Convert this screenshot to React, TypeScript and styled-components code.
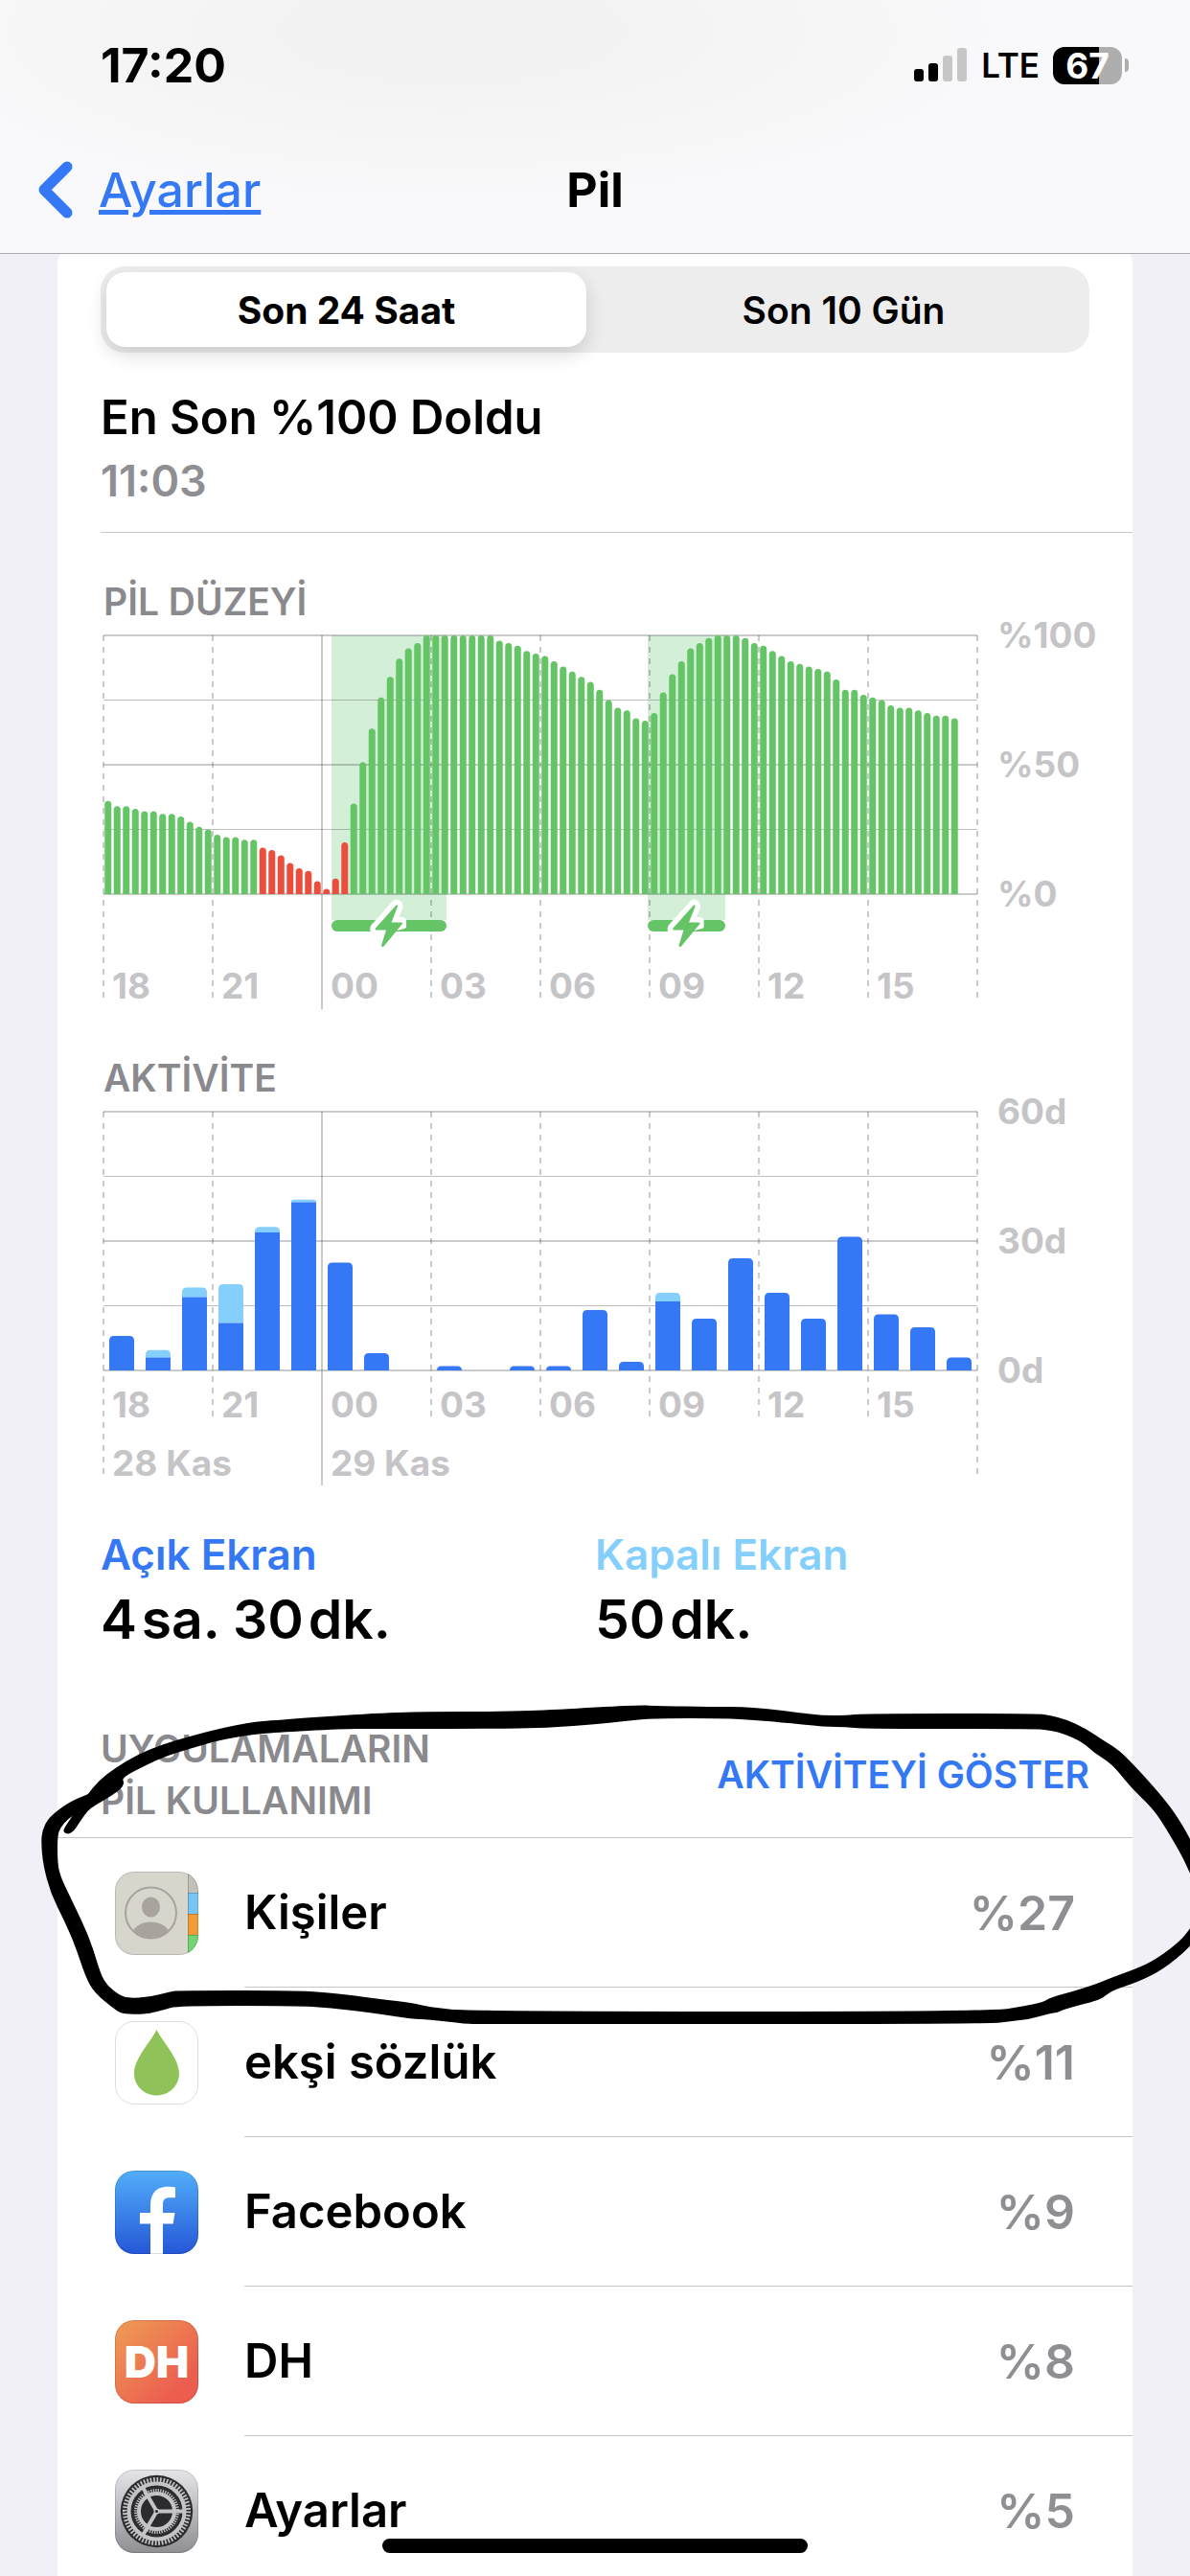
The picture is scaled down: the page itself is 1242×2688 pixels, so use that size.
import React, { useId, useState } from "react";
import styled, { createGlobalStyle } from "styled-components";

const color = {
  page: "#f1f0f6",
  card: "#ffffff",
  ink: "#000000",
  blue: "#3478f6",
  sky: "#84cffb",
  green: "#65c466",
  red: "#eb4e3d",
  grey: "#8e8e93",
  caption: "#8a8a8e",
  axis: "#c5c5c7",
  line: "#c6c6c8",
};

const fontStack = `Inter, "Liberation Sans", sans-serif`;

const GlobalStyle = createGlobalStyle`
  *, *::before, *::after { box-sizing: border-box; }
  body {
    margin: 0;
    background: ${color.page};
    color: ${color.ink};
    font-family: ${fontStack};
    font-weight: 600;
  }
  h1, h2, p, ul, dl, dd { margin: 0; padding: 0; }
  button { font: inherit; color: inherit; border: 0; background: none; padding: 0; cursor: pointer; }
`;

const Screen = styled.div`
  position: relative;
  display: flex;
  flex-direction: column;
  height: 100vh;
  overflow: hidden;
`;

/* ---------- header ---------- */

const Header = styled.header`
  position: relative;
  z-index: 1;
  flex: none;
  padding-bottom: 4px;
  border-bottom: 1px solid #a9a9ad;
  background: radial-gradient(ellipse 48% 70% at 38% 12%, #f2f2f2 20%, #f9f9fb 100%);
`;

const StatusBar = styled.div`
  display: flex;
  align-items: center;
  justify-content: space-between;
  height: 136px;
  padding: 0 64px 0 105px;
`;

const Clock = styled.time`
  font-size: 50px;
  font-weight: 700;
`;

const StatusIcons = styled.div`
  display: flex;
  align-items: center;
  gap: 14px;
`;

const Carrier = styled.span`
  font-size: 35px;
  font-weight: 600;
`;

const Battery = styled.span`
  display: flex;
  align-items: center;
  gap: 3px;

  &::after {
    content: "";
    width: 4px;
    height: 14px;
    border-radius: 0 4px 4px 0;
    background: #aeaeae;
  }
`;

const BatteryBody = styled.span<{ $level: number }>`
  width: 72px;
  height: 39px;
  border-radius: 12px;
  background: linear-gradient(to right, #000 ${(p) => p.$level}%, #aeaeae ${(p) => p.$level}%);
  color: #fff;
  font-size: 37px;
  font-weight: 700;
  line-height: 39px;
  text-align: center;
`;

const NavBar = styled.nav`
  display: grid;
  grid-template-columns: 1fr auto 1fr;
  align-items: center;
  height: 124px;
  padding: 0 40px;
`;

const BackLink = styled.a`
  display: flex;
  align-items: center;
  gap: 27px;
  color: ${color.blue};
  font-size: 50px;
  font-weight: 500;
  text-decoration: none;
`;

const BackLabel = styled.span`
  text-decoration: underline;
  text-decoration-thickness: 5px;
`;

const Title = styled.h1`
  font-size: 50px;
  font-weight: 700;
`;

/* ---------- card ---------- */

const Content = styled.main`
  flex: 1;
  min-height: 0;
  padding: 0 60px;
`;

const Card = styled.div`
  margin-top: -18px;
  padding-top: 31px;
  border-radius: 30px 30px 0 0;
  background: ${color.card};
`;

const Segmented = styled.div`
  display: grid;
  grid-template-columns: 1fr 1fr;
  gap: 18px;
  height: 90px;
  margin: 0 45px;
  padding: 6px;
  border-radius: 25px;
  background: #ededed;
`;

const Segment = styled.button<{ $active: boolean }>`
  border-radius: 20px;
  font-size: 39px;
  font-weight: ${(p) => (p.$active ? 700 : 600)};
  ${(p) => p.$active && `background: #fff; box-shadow: 0 8px 20px rgba(0, 0, 0, 0.14);`}
`;

const LastCharge = styled.section`
  margin: 38px 0 0 45px;
  padding-bottom: 25px;
  border-bottom: 1px solid ${color.line};
`;

const LastChargeTitle = styled.h2`
  font-size: 49px;
  font-weight: 600;
  line-height: 60px;
`;

const LastChargeTime = styled.p`
  margin-top: 8px;
  color: ${color.grey};
  font-size: 45px;
  line-height: 56px;
`;

const ChartSection = styled.section`
  margin: 48px 0 0 48px;
`;

const ChartTitle = styled.h2`
  color: ${color.caption};
  font-size: 39px;
  font-weight: 600;
  line-height: 48px;
`;

const ChartSvg = styled.svg`
  display: block;
  width: 100%;
  height: auto;
  overflow: visible;

  text {
    fill: ${color.axis};
    font-size: 37px;
    font-weight: 700;
  }
`;

const Totals = styled.dl`
  display: grid;
  grid-template-columns: 1fr 1fr;
  margin: 44px 45px 0;
`;

const TotalName = styled.dt<{ $color: string }>`
  color: ${(p) => p.$color};
  font-size: 44px;
  line-height: 56px;
`;

const TotalValue = styled.dd`
  padding-top: 4px;
  font-size: 57px;
  font-weight: 600;
  line-height: 72px;
`;

const Usage = styled.section`
  position: relative;
  margin-top: 72px;
`;

const UsageHeader = styled.div`
  display: flex;
  align-items: center;
  justify-content: space-between;
  padding: 0 45px 11px;
  border-bottom: 1px solid ${color.line};
`;

const UsageTitle = styled.h2`
  width: 360px;
  color: ${color.caption};
  font-size: 39px;
  font-weight: 600;
  line-height: 54px;
`;

const ToggleButton = styled.button`
  color: ${color.blue};
  font-size: 39px;
  font-weight: 600;
  line-height: 54px;
`;

const AppList = styled.ul`
  list-style: none;
`;

const AppRow = styled.li`
  display: flex;
  align-items: center;
  gap: 48px;
  height: 156px;
  padding-left: 60px;
`;

const AppText = styled.div`
  display: flex;
  flex: 1;
  align-items: center;
  justify-content: space-between;
  align-self: stretch;
  padding-right: 60px;
  border-bottom: 1px solid ${color.line};
`;

const AppName = styled.span`
  font-size: 49px;
`;

const AppShare = styled.span`
  color: ${color.grey};
  font-size: 50px;
`;

const Scribble = styled.svg`
  position: absolute;
  top: -28px;
  left: -60px;
  width: calc(100% + 120px);
  height: auto;
  overflow: visible;
  pointer-events: none;
`;

const HomeIndicator = styled.div`
  position: absolute;
  bottom: 24px;
  left: 50%;
  width: 444px;
  height: 15px;
  border-radius: 8px;
  background: #000;
  transform: translateX(-50%);
`;

/* ---------- charts ---------- */

const PLOT_WIDTH = 912;
const PLOT_TOP = 11;
const PLOT_HEIGHT = 270;
const PLOT_BOTTOM = PLOT_TOP + PLOT_HEIGHT;
const STEP = 114;
const hours = ["18", "21", "00", "03", "06", "09", "12", "15"];

const levels = [
  36, 34, 34, 33, 32, 32, 31, 31, 30, 28, 26, 25, 23, 22, 22, 21, 21, 18, 17, 15, 12, 10, 9, 5, 2, 6, 20, 35, 51, 64,
  76, 84, 91, 95, 97, 100, 100, 100, 100, 100, 100, 100, 100, 98, 97, 96, 94, 93, 92, 90, 88, 86, 84, 82, 79, 75, 72,
  71, 68, 67, 70, 78, 85, 90, 95, 97, 99, 100, 100, 100, 99, 97, 96, 94, 92, 90, 89, 88, 87, 86, 83, 79, 79, 77, 76,
  75, 73, 72, 72, 71, 70, 69, 69, 68,
];

const charges = [
  { from: 238, to: 358 },
  { from: 568, to: 649 },
];

/* [screen on, screen off] minutes per hour */
const activity: [number, number][] = [
  [8, 0], [3, 1.7], [17, 2.2], [11, 9], [32, 1.3], [39, 0.6], [25, 0], [4, 0],
  [0, 0], [1, 0], [0, 0], [1, 0], [1, 0], [14, 0], [2, 0], [16, 2],
  [12, 0], [26, 0], [18, 0], [12, 0], [31, 0], [13, 0], [10, 0], [3, 0],
];

function roundedBar(x: number, top: number, width: number, bottom: number, radius: number) {
  const r = Math.min(radius, bottom - top);
  return `M${x} ${bottom}V${top + r}q0 ${-r} ${r} ${-r}h${width - 2 * r}q${r} 0 ${r} ${r}V${bottom}z`;
}

function GridRows({ labels }: { labels: string[] }) {
  return (
    <>
      {[0, 1, 2, 3, 4].map((i) => {
        const y = PLOT_TOP + (PLOT_HEIGHT / 4) * i;
        const minor = i % 2 === 1;
        return (
          <line key={i} x1={0} x2={PLOT_WIDTH} y1={y} y2={y} stroke="#3c3c43" strokeOpacity={minor ? 0.32 : 0.27}
            strokeWidth={minor ? 1 : 2} />
        );
      })}
      {labels.map((label, i) => (
        <text key={label} x={PLOT_WIDTH + 21} y={PLOT_TOP + (PLOT_HEIGHT / 2) * i + 13}>{label}</text>
      ))}
    </>
  );
}

function GridColumns({ bottom, edgeBottom }: { bottom: number; edgeBottom: number }) {
  return (
    <>
      {[...hours, ""].map((hour, i) => {
        const midnight = hour === "00";
        const edge = i === 0 || i === hours.length;
        return (
          <line key={i} x1={i * STEP} x2={i * STEP} y1={PLOT_TOP}
            y2={midnight ? edgeBottom + 6 : edge ? edgeBottom : bottom}
            stroke="#3c3c43" strokeOpacity={0.27} strokeWidth={2} strokeDasharray={midnight ? undefined : "6 6"} />
        );
      })}
    </>
  );
}

function HourLabels({ y }: { y: number }) {
  return (
    <>
      {hours.map((hour, i) => (
        <text key={hour} x={i * STEP + 9} y={y}>{hour}</text>
      ))}
    </>
  );
}

const BOLT = "M22 0.5 L0.5 24.5 Q-0.5 26.5 1.5 26.5 L11.5 26.5 L6.5 42.5 Q7 45 9 43.5 L28 20.5 Q29.5 18.5 27 18.5 L17 18.5 L23.5 2 Q23.5 -0.5 22 0.5z";

function LevelChart() {
  return (
    <ChartSvg viewBox="0 0 1074 401" role="img" aria-label="Pil düzeyi grafiği">
      {charges.map((c) => (
        <rect key={c.from} x={c.from} y={PLOT_TOP} width={c.to - c.from} height={297} fill="#d3efd8" />
      ))}
      <GridRows labels={["%100", "%50", "%0"]} />
      <GridColumns bottom={395} edgeBottom={395} />
      {levels.map((level, i) => (
        <path key={i}
          d={roundedBar(i * 9.5 + 1.25, PLOT_BOTTOM - (level / 100) * PLOT_HEIGHT, 7, PLOT_BOTTOM, 3.5)}
          fill={level <= 20 ? color.red : color.green} />
      ))}
      {charges.map((c) => (
        <g key={c.from}>
          <rect x={c.from} y={308} width={c.to - c.from} height={12} rx={6} fill={color.green} />
          <g transform={`translate(${(c.from + c.to) / 2 - 14.5} 292)`}>
            <path d={BOLT} fill="#fff" stroke="#fff" strokeWidth={11} strokeLinejoin="round"
              clipPath="path('M-8 -8H38V30L22 34H-8z')" />
            <path d={BOLT} fill={color.green} />
          </g>
        </g>
      ))}
      <HourLabels y={390} />
    </ChartSvg>
  );
}

function ActivityChart() {
  const y = (minutes: number) => PLOT_BOTTOM - minutes * 4.5;
  return (
    <ChartSvg viewBox="0 0 1074 401" role="img" aria-label="Aktivite grafiği">
      <GridRows labels={["60d", "30d", "0d"]} />
      <GridColumns bottom={335} edgeBottom={395} />
      {activity.map(([on, off], i) => {
        const x = i * 38 + 6;
        if (!on) return null;
        if (!off) return <path key={i} d={roundedBar(x, y(on), 26, PLOT_BOTTOM, 5)} fill={color.blue} />;
        return (
          <g key={i}>
            <path d={roundedBar(x, y(on + off), 26, y(on), 5)} fill={color.sky} />
            <rect x={x} y={y(on)} width={26} height={on * 4.5} fill={color.blue} />
          </g>
        );
      })}
      <HourLabels y={330} />
      <text x={9} y={391}>28 Kas</text>
      <text x={2 * STEP + 9} y={391}>29 Kas</text>
    </ChartSvg>
  );
}

/* ---------- icons ---------- */

function IconFrame({ children, fill }: { children: (id: string) => React.ReactNode; fill: (id: string) => string }) {
  const id = useId();
  return (
    <svg width="87" height="87" viewBox="0 0 87 87" aria-hidden="true">
      <clipPath id={`${id}c`}>
        <rect width="87" height="87" rx="20" />
      </clipPath>
      <g clipPath={`url(#${id}c)`}>
        <rect width="87" height="87" fill={fill(id)} />
        {children(id)}
      </g>
      <rect x=".5" y=".5" width="86" height="86" rx="19.5" fill="none" stroke="#000" strokeOpacity=".13" />
    </svg>
  );
}

function ContactsIcon() {
  return (
    <IconFrame fill={() => "#d6d6cd"}>
      {(id) => (
        <>
          <rect x="76" width="11" height="22" fill="#c2c1b9" />
          <rect x="76" y="22" width="11" height="22" fill="#75c5f5" />
          <rect x="76" y="44" width="11" height="22" fill="#f19a37" />
          <rect x="76" y="66" width="11" height="21" fill="#72d572" />
          <path d="M76.500 0V87M76 22.500H87M76 44.500H87M76 66.500H87" stroke="#000" strokeOpacity=".2" />
          <clipPath id={`${id}p`}>
            <circle cx="37.500" cy="43" r="27" />
          </clipPath>
          <ellipse cx="37.500" cy="37" rx="9.500" ry="10.500" fill="#a8a39d" />
          <ellipse cx="37.500" cy="66" rx="19.500" ry="13.500" fill="#a8a39d" clipPath={`url(#${id}p)`} />
          <circle cx="37.500" cy="43" r="26.500" fill="none" stroke="#a8a39d" strokeWidth="2" />
        </>
      )}
    </IconFrame>
  );
}

function DropIcon() {
  return (
    <IconFrame fill={() => "#ffffff"}>
      {() => <path d="M43.500 9C50 22 67 39 67 54.500C67 68 56 77.500 43.500 77.500S20 68 20 54.500C20 39 37 22 43.500 9z" fill="#8fc258" />}
    </IconFrame>
  );
}

function FacebookIcon() {
  return (
    <IconFrame fill={(id) => `url(#${id}g)`}>
      {(id) => (
        <>
          <linearGradient id={`${id}g`} x2="0" y2="1">
            <stop stopColor="#52aefa" />
            <stop offset="1" stopColor="#2557d7" />
          </linearGradient>
          <path d="M37 87V55.500H26V44H37V36C37 23 44 16.700 55 16.700C58 16.700 61 17 63 17.500V28.300H57C52 28.300 50 31 50 35V44H62.500L60.700 55.500H50V87z" fill="#fff" />
        </>
      )}
    </IconFrame>
  );
}

function DhIcon() {
  return (
    <IconFrame fill={(id) => `url(#${id}g)`}>
      {(id) => (
        <>
          <linearGradient id={`${id}g`} x2="1" y2="1">
            <stop offset=".1" stopColor="#ee9553" />
            <stop offset=".8" stopColor="#ec5d50" />
          </linearGradient>
          <text x="43.500" y="60" textAnchor="middle" fill="#fff" fontSize="46" fontWeight="900">DH</text>
        </>
      )}
    </IconFrame>
  );
}

function SettingsIcon() {
  const metal = "#c4c4c8";
  const dark = "#2c2c2e";
  return (
    <IconFrame fill={(id) => `url(#${id}g)`}>
      {(id) => (
        <>
          <linearGradient id={`${id}g`} x2="0" y2="1">
            <stop stopColor="#e4e4e9" />
            <stop offset="1" stopColor="#8e8e93" />
          </linearGradient>
          <g transform="translate(43.500 43.500)" fill="none">
            <circle r="37.700" fill={dark} />
            <circle r="33" stroke={metal} strokeWidth="5" pathLength="120" strokeDasharray="1 1" />
            <circle r="29" stroke={metal} strokeWidth="4" />
            <circle r="21.500" stroke={metal} strokeWidth="4" pathLength="108" strokeDasharray="1 1" />
            <circle r="18.500" stroke={metal} strokeWidth="4" />
            {[0, 120, 240].map((a) => (
              <path key={a} d="M2 0H29" stroke={metal} strokeWidth="4" transform={`rotate(${a})`} />
            ))}
            <circle r="3" fill={metal} />
            <circle r="1.500" fill={dark} />
          </g>
        </>
      )}
    </IconFrame>
  );
}

function SignalIcon() {
  return (
    <svg width="56" height="36" viewBox="0 0 56 36" aria-hidden="true">
      <rect x="0" y="22" width="10" height="13" rx="3" />
      <rect x="15" y="16" width="10" height="19" rx="3" />
      <rect x="30" y="8" width="10" height="27" rx="3" fill="#c6c6c7" />
      <rect x="45" y="0" width="10" height="35" rx="3" fill="#c6c6c7" />
    </svg>
  );
}

/* ---------- hand-drawn loop ---------- */

type Point = [number, number];

const upperStroke: Point[] = [
  [67, 1907], [91, 1873], [103, 1858], [120, 1845], [143, 1831], [170, 1820], [201, 1811], [232, 1803], [263, 1797],
  [286, 1795], [384, 1788], [446, 1786], [527, 1786], [580, 1784], [665, 1779], [684, 1780], [743, 1781], [772, 1781],
  [801, 1783], [833, 1787], [858, 1790], [883, 1790], [901, 1788], [1083, 1788], [1096, 1790], [1112, 1794],
  [1132, 1803], [1153, 1817], [1163, 1823], [1173, 1831], [1194, 1853], [1214, 1876], [1227, 1893], [1242, 1918],
  [1256, 1950], [1256, 1985], [1242, 1955], [1234, 1937], [1214, 1903], [1202, 1886], [1181, 1866], [1165, 1846],
  [1155, 1837], [1142, 1829], [1130, 1818], [1108, 1808], [1091, 1805], [1079, 1804], [901, 1804], [883, 1802],
  [862, 1802], [813, 1797], [788, 1795], [756, 1793], [684, 1793], [661, 1795], [625, 1799], [571, 1803], [513, 1804],
  [388, 1804], [357, 1804], [286, 1808], [263, 1810], [228, 1816], [201, 1824], [174, 1832], [152, 1842], [127, 1855],
  [130, 1861], [125, 1868], [111, 1877], [94, 1887], [89, 1893], [82, 1903], [77, 1911], [71, 1914], [66, 1912],
];

const lowerStroke: Point[] = [
  [120, 1852], [96, 1871], [74, 1879], [51, 1896], [44, 1910], [43, 1923], [45, 1946], [53, 1976], [67, 2004],
  [78, 2029], [89, 2062], [98, 2079], [120, 2097], [127, 2101], [143, 2102], [156, 2101], [172, 2097], [185, 2093],
  [308, 2093], [344, 2095], [393, 2101], [431, 2107], [446, 2107], [487, 2112], [500, 2112], [1034, 2112],
  [1054, 2109], [1075, 2107], [1095, 2101], [1104, 2100], [1112, 2096], [1140, 2089], [1151, 2085], [1159, 2078],
  [1173, 2073], [1190, 2067], [1214, 2055], [1242, 2032], [1256, 2012], [1256, 1990], [1242, 2013], [1231, 2026],
  [1210, 2042], [1192, 2052], [1159, 2064], [1145, 2070], [1120, 2078], [1097, 2084], [1089, 2089], [1071, 2093],
  [1034, 2099], [491, 2099], [446, 2094], [431, 2090], [397, 2086], [344, 2079], [303, 2077], [187, 2077], [178, 2078],
  [156, 2084], [134, 2085], [125, 2082], [112, 2072], [105, 2060], [94, 2023], [76, 1985], [62, 1956], [60, 1940],
  [60, 1916], [63, 1907], [71, 1898], [80, 1892], [94, 1886], [120, 1868],
];

/* closed curve whose knots are the midpoints between neighbouring points */
function smooth(points: Point[]) {
  const mid = (a: Point, b: Point) => `${(a[0] + b[0]) / 2} ${(a[1] + b[1]) / 2}`;
  const last = points[points.length - 1];
  return (
    `M${mid(last, points[0])}` +
    points.map((p, i) => `Q${p[0]} ${p[1]} ${mid(p, points[(i + 1) % points.length])}`).join("") +
    "z"
  );
}

/* ---------- page ---------- */

const apps = [
  { name: "Kişiler", share: "%27", Icon: ContactsIcon },
  { name: "ekşi sözlük", share: "%11", Icon: DropIcon },
  { name: "Facebook", share: "%9", Icon: FacebookIcon },
  { name: "DH", share: "%8", Icon: DhIcon },
  { name: "Ayarlar", share: "%5", Icon: SettingsIcon },
];

const ranges = ["Son 24 Saat", "Son 10 Gün"];

export default function App() {
  const [range, setRange] = useState(ranges[0]);

  return (
    <Screen lang="tr">
      <GlobalStyle />
      <Header>
        <StatusBar>
          <Clock>17:20</Clock>
          <StatusIcons>
            <SignalIcon />
            <Carrier>LTE</Carrier>
            <Battery>
              <BatteryBody $level={67}>67</BatteryBody>
            </Battery>
          </StatusIcons>
        </StatusBar>
        <NavBar>
          <BackLink href="#ayarlar">
            <svg width="36" height="62" viewBox="0 0 36 62" fill="none" aria-hidden="true">
              <path d="M30 7L6 31L30 55" stroke="currentColor" strokeWidth="11" strokeLinecap="round" strokeLinejoin="round" />
            </svg>
            <BackLabel>Ayarlar</BackLabel>
          </BackLink>
          <Title>Pil</Title>
        </NavBar>
      </Header>

      <Content>
        <Card>
          <Segmented>
            {ranges.map((label) => (
              <Segment key={label} type="button" $active={label === range} aria-pressed={label === range}
                onClick={() => setRange(label)}>
                {label}
              </Segment>
            ))}
          </Segmented>

          <LastCharge>
            <LastChargeTitle>En Son %100 Doldu</LastChargeTitle>
            <LastChargeTime>11:03</LastChargeTime>
          </LastCharge>

          <ChartSection>
            <ChartTitle>PİL DÜZEYİ</ChartTitle>
            <LevelChart />
          </ChartSection>

          <ChartSection>
            <ChartTitle>AKTİVİTE</ChartTitle>
            <ActivityChart />
          </ChartSection>

          <Totals>
            <div>
              <TotalName $color={color.blue}>Açık Ekran</TotalName>
              <TotalValue>{"4\u200asa. 30\u200adk."}</TotalValue>
            </div>
            <div>
              <TotalName $color={color.sky}>Kapalı Ekran</TotalName>
              <TotalValue>{"50\u200adk."}</TotalValue>
            </div>
          </Totals>

          <Usage>
            <UsageHeader>
              <UsageTitle>UYGULAMALARIN PİL KULLANIMI</UsageTitle>
              <ToggleButton type="button">AKTİVİTEYİ GÖSTER</ToggleButton>
            </UsageHeader>
            <AppList>
              {apps.map(({ name, share, Icon }) => (
                <AppRow key={name}>
                  <Icon />
                  <AppText>
                    <AppName>{name}</AppName>
                    <AppShare>{share}</AppShare>
                  </AppText>
                </AppRow>
              ))}
            </AppList>
            <Scribble viewBox="0 1770 1242 350" aria-hidden="true">
              <path d={smooth(upperStroke)} />
              <path d={smooth(lowerStroke)} />
            </Scribble>
          </Usage>
        </Card>
      </Content>
      <HomeIndicator />
    </Screen>
  );
}
